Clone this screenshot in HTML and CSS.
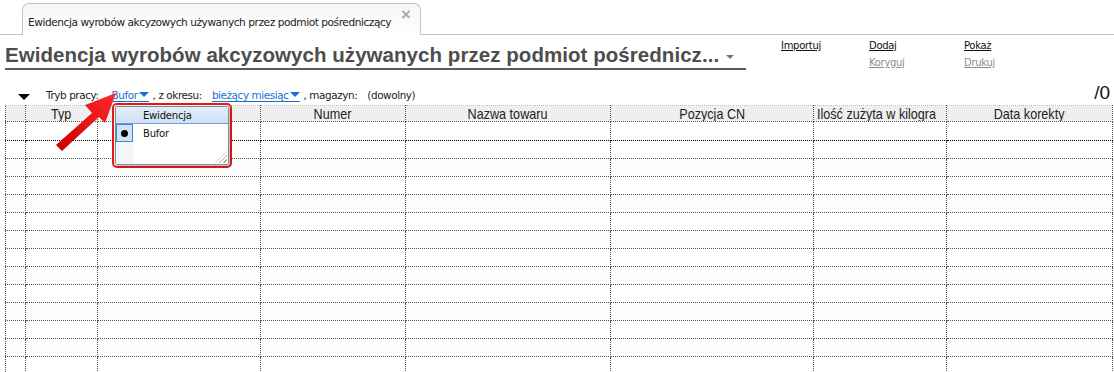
FILE: index.html
```html
<!DOCTYPE html>
<html lang="pl">
  <head>
    <meta charset="UTF-8" />
    <title>Ewidencja wyrobów akcyzowych</title>
    <link rel="stylesheet" href="styles.css">
  </head>
  <body>
    <div class="tabbar">
      <div class="tab">
        <span class="tab-title">Ewidencja wyrobów akcyzowych używanych przez podmiot pośredniczący</span>
        <span class="tab-close">×</span>
      </div>
    </div>

    <div class="header">
      <h1 class="title">Ewidencja wyrobów akcyzowych używanych przez podmiot pośrednicz... <span class="title-caret"></span></h1>
      <div class="actions">
        <div class="action-col"><a class="act">Importuj</a></div>
        <div class="action-col"><a class="act">Dodaj</a><a class="act dim">Koryguj</a></div>
        <div class="action-col"><a class="act">Pokaż</a><a class="act dim">Drukuj</a></div>
      </div>
    </div>

    <div class="content">
      <div class="filters">
        <span class="toggle"></span>
        <span class="lbl">Tryb pracy:</span>
        <a class="pick pick-mode">Bufor<span class="caret"></span></a>
        <span class="lbl">, z okresu:</span>
        <a class="pick pick-period">bieżący miesiąc<span class="caret"></span></a>
        <span class="lbl">, magazyn:</span>
        <span class="lbl lbl-any">(dowolny)</span>
        <span class="count">/0</span>
      </div>

      <table class="grid">
        <colgroup>
          <col style="width:20px">
          <col style="width:72px">
          <col style="width:163px">
          <col style="width:145px">
          <col style="width:205px">
          <col style="width:203px">
          <col style="width:133px">
          <col style="width:166px">
        </colgroup>
        <thead>
          <tr>
            <th></th>
            <th><span class="hd">Typ</span></th>
            <th></th>
            <th><span class="hd">Numer</span></th>
            <th><span class="hd">Nazwa towaru</span></th>
            <th><span class="hd">Pozycja CN</span></th>
            <th class="left"><span class="hd">Ilość zużyta w kilogra</span></th>
            <th><span class="hd">Data korekty</span></th>
          </tr>
        </thead>
        <tbody id="rows"></tbody>
      </table>

      <svg class="arrow" width="70" height="62" viewBox="0 0 70 62">
        <defs>
          <linearGradient id="ag" x1="0" y1="1" x2="1" y2="0">
            <stop offset="0" stop-color="#c80000"/>
            <stop offset="1" stop-color="#ff2a2a"/>
          </linearGradient>
        </defs>
        <polygon points="2,56 38,24 31,16 62,4 51,34 45,28 8,62" fill="url(#ag)"/>
      </svg>

      <div class="popup">
        <div class="popup-inner">
          <div class="popup-head"><span class="gut"></span><span>Ewidencja</span></div>
          <div class="popup-row"><span class="radio"><span class="dot"></span></span><span>Bufor</span></div>
          <div class="popup-rest"><span class="gut"></span><span class="grip"></span></div>
        </div>
      </div>
    </div>

    <script>
      const tbody = document.getElementById("rows");
      for (let i = 0; i < 14; i++) {
        const tr = document.createElement("tr");
        if (i === 0) tr.className = "sel";
        else if (i % 2 === 0) tr.className = "alt";
        for (let c = 0; c < 8; c++) {
          tr.appendChild(document.createElement("td"));
        }
        tbody.appendChild(tr);
      }
    </script>
  </body>
</html>
```

FILE: styles.css
```css
* {
  margin: 0;
  padding: 0;
  box-sizing: border-box;
}
body {
  background: #fff;
  font-family: "Liberation Sans", Arial, sans-serif;
  font-size: 11px;
  color: #000;
  width: 1114px;
  height: 372px;
  overflow: hidden;
}
.tabbar {
  height: 35px;
  padding: 3px 0 0 22px;
  border-bottom: 1px solid #c4c4c4;
  display: flex;
  align-items: flex-end;
}
.tab {
  width: 399px;
  height: 32px;
  margin-bottom: -1px;
  border: 1px solid #c4c4c4;
  border-bottom: none;
  border-radius: 7px 7px 0 0;
  background: linear-gradient(#f6f6f6, #fff);
  display: flex;
  align-items: center;
  padding: 0 8px 0 5px;
  position: relative;
}
.tab-title {
  font-family: "DejaVu Sans", sans-serif;
  font-size: 10.6px;
  letter-spacing: -0.45px;
  color: #222;
  margin-top: 5px;
}
.tab-close {
  position: absolute;
  right: 9px;
  top: 1px;
  font-size: 17px;
  font-weight: bold;
  color: #aaa;
}
.header {
  display: flex;
  padding: 3px 0 0 5px;
  height: 50px;
}
.title {
  width: 741px;
  font-size: 20.5px;
  font-weight: bold;
  color: #4d4d4d;
  height: 32px;
  padding-top: 5px;
  border-bottom: 2px solid #5a5a5a;
  white-space: nowrap;
  letter-spacing: 0.05px;
}
.title-caret {
  display: inline-block;
  width: 0;
  height: 0;
  border-left: 4px solid transparent;
  border-right: 4px solid transparent;
  border-top: 4px solid #777;
  vertical-align: middle;
  margin-left: 1px;
}
.actions {
  display: flex;
  padding: 1px 0 0 35px;
}
.action-col {
  display: flex;
  flex-direction: column;
  width: 88px;
  gap: 3px;
}
.action-col:nth-child(2) {
  width: 95px;
}
.act {
  font-family: "DejaVu Sans", sans-serif;
  font-size: 10px;
  letter-spacing: -0.3px;
  color: #111;
  text-decoration: underline;
  line-height: 14px;
}
.act.dim {
  color: #8a8a9a;
}
.content {
  position: relative;
}
.filters {
  display: flex;
  align-items: center;
  height: 20px;
  padding: 0 4px 0 18px;
  font-family: "DejaVu Sans", sans-serif;
  font-size: 10.4px;
  letter-spacing: -0.4px;
  color: #222;
}
.toggle {
  width: 0;
  height: 0;
  border-left: 6px solid transparent;
  border-right: 6px solid transparent;
  border-top: 6px solid #000;
  margin: 4px 16px 0 0;
}
.pick {
  color: #1a6fd0;
  text-decoration: none;
  border-bottom: 1px solid #1a6fd0;
  line-height: 12px;
  display: flex;
  align-items: center;
  margin-right: 4px;
}
.pick-mode {
  margin-left: 13px;
}
.pick-period {
  margin-left: 10px;
}
.lbl-any {
  margin-left: 10px;
}
.caret {
  width: 0;
  height: 0;
  border-left: 5px solid transparent;
  border-right: 5px solid transparent;
  border-top: 5px solid #1a6fd0;
  margin-left: 1px;
}
.count {
  margin-left: auto;
  font-family: "Liberation Sans", sans-serif;
  font-size: 19px;
  letter-spacing: 0;
  color: #111;
  margin-top: -5px;
}
.grid {
  margin-left: 5px;
  width: 1107px;
  border-collapse: collapse;
  table-layout: fixed;
  border-left: 1px dotted #555;
  border-top: 1px dotted #bbb;
}
.grid th,
.grid td {
  border-right: 1px dotted #555;
  border-bottom: 1px dotted #555;
}
.grid th {
  height: 16px;
  background: #efefef;
  font-family: "Liberation Sans", sans-serif;
  font-size: 15px;
  font-weight: normal;
  color: #222;
  white-space: nowrap;
  overflow: hidden;
  line-height: 15px;
}
.grid th.left {
  text-align: left;
}
.hd {
  display: inline-block;
  transform: scaleX(0.84);
}
.grid th.left .hd {
  transform-origin: left center;
  margin-left: 3px;
}
.grid td {
  height: 18px;
}
.grid tr.sel td {
  height: 19px;
  border-bottom: 1px dotted #000;
}
.grid tr.alt td {
  background: #fcfcfc;
}
.arrow {
  position: absolute;
  left: 54px;
  top: 4px;
}
.popup {
  position: absolute;
  left: 112px;
  top: 18px;
  width: 120px;
  height: 65px;
  border: 2px solid #e81818;
  border-radius: 5px;
  padding: 1px;
  background: #fff;
}
.popup-inner {
  height: 100%;
  border: 1px solid #8a8a8a;
  border-radius: 2px;
  box-shadow: 1px 1px 3px rgba(0, 0, 0, 0.35);
  display: flex;
  flex-direction: column;
  font-family: "DejaVu Sans", sans-serif;
  font-size: 10px;
  letter-spacing: -0.2px;
  color: #111;
}
.popup-head {
  height: 17px;
  background: linear-gradient(#e3eef9, #cfe0f2);
  border-bottom: 1px solid #6e9fd4;
  display: flex;
  align-items: center;
}
.gut {
  width: 18px;
  align-self: stretch;
  flex: none;
}
.popup-head span:last-child {
  margin-left: 9px;
}
.popup-row {
  height: 18px;
  display: flex;
  align-items: center;
}
.radio {
  width: 17px;
  height: 18px;
  border: 1px solid #3a86d0;
  background: #cfe3f5;
  display: flex;
  align-items: center;
  justify-content: center;
  margin-right: 10px;
}
.dot {
  width: 7px;
  height: 7px;
  border-radius: 50%;
  background: #000;
}
.popup-rest {
  flex: 1;
  display: flex;
  position: relative;
}
.popup-rest .gut {
  background: #f2f6fa;
}
.grip {
  position: absolute;
  right: 1px;
  bottom: 1px;
  width: 12px;
  height: 12px;
  background: repeating-linear-gradient(135deg, transparent 0 2px, #aaa 2px 3px);
  clip-path: polygon(100% 0, 100% 100%, 0 100%);
}
```
